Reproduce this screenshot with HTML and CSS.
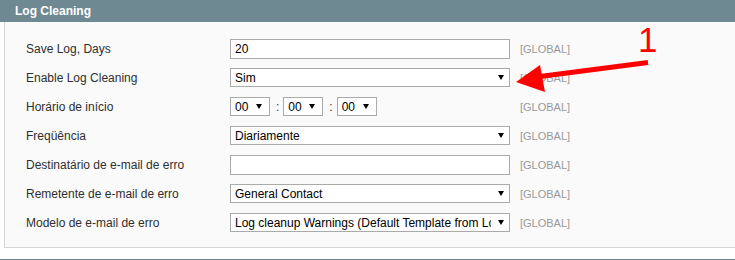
FILE: index.html
```html
<!DOCTYPE html>
<html lang="pt">

<head>
    <meta charset="UTF-8">
    <meta name="viewport" content="width=device-width, initial-scale=1.0">
    <title>Log Cleaning</title>
    <link rel="stylesheet" href="styles.css">
</head>

<body>
    <div class="section">
        <div class="section-head">
            <h4>Log Cleaning</h4>
        </div>
        <div class="section-body">
            <div class="form-row">
                <label>Save Log, Days</label>
                <div class="value"><input class="input-text" type="text" value="20"></div>
                <span class="scope">[GLOBAL]</span>
            </div>
            <div class="form-row">
                <label>Enable Log Cleaning</label>
                <div class="value">
                    <div class="select wide"><select><option>Sim</option></select></div>
                </div>
                <span class="scope">[GLOBAL]</span>
            </div>
            <div class="form-row">
                <label>Horário de início</label>
                <div class="value time">
                    <div class="select small"><select><option>00</option></select></div>
                    <span class="colon">:</span>
                    <div class="select small"><select><option>00</option></select></div>
                    <span class="colon">:</span>
                    <div class="select small"><select><option>00</option></select></div>
                </div>
                <span class="scope">[GLOBAL]</span>
            </div>
            <div class="form-row">
                <label>Freqüência</label>
                <div class="value">
                    <div class="select wide"><select><option>Diariamente</option></select></div>
                </div>
                <span class="scope">[GLOBAL]</span>
            </div>
            <div class="form-row">
                <label>Destinatário de e-mail de erro</label>
                <div class="value"><input class="input-text" type="text" value=""></div>
                <span class="scope">[GLOBAL]</span>
            </div>
            <div class="form-row">
                <label>Remetente de e-mail de erro</label>
                <div class="value">
                    <div class="select wide"><select><option>General Contact</option></select></div>
                </div>
                <span class="scope">[GLOBAL]</span>
            </div>
            <div class="form-row">
                <label>Modelo de e-mail de erro</label>
                <div class="value">
                    <div class="select wide"><select><option>Log cleanup Warnings (Default Template from Locale)</option></select></div>
                </div>
                <span class="scope">[GLOBAL]</span>
            </div>
        </div>
    </div>
    <div class="section-head next"></div>

    <!-- annotation drawn over the screenshot -->
    <svg class="annotation" width="735" height="260" viewBox="0 0 735 260">
        <text x="638" y="52" class="mark">1</text>
        <line x1="648" y1="62.5" x2="536" y2="77" stroke="#f00" stroke-width="5" />
        <polygon points="516,82 540,65 545,92" fill="#f00" />
    </svg>
</body>

</html>
```

FILE: styles.css
```css
* {
    padding: 0;
    margin: 0;
    box-sizing: border-box;
}

body {
    position: relative;
    overflow: hidden;
    background: #fff;
    font-family: "Liberation Sans", Arial, sans-serif;
    font-size: 12px;
    color: #2f2f2f;
}

.section-head {
    height: 22px;
    background-color: #6f8992;
    padding: 0 15px;
}

.section-head h4 {
    font-size: 12px;
    font-weight: bold;
    line-height: 22px;
    color: #fff;
}

.section-head.next {
    margin-top: 11px;
}

.section-body {
    width: 740px;
    margin-left: 4px;
    padding: 12px 0 10px 21px;
    background-color: #fafafa;
    border: 1px solid #d6d6d6;
    border-top: 0;
}

.form-row {
    display: grid;
    grid-template-columns: 204px 280px auto;
    align-items: center;
    height: 29px;
}

.form-row label {
    color: #2f2f2f;
}

.value {
    display: flex;
    align-items: center;
}

.input-text {
    width: 280px;
    height: 20px;
    padding: 0 4px;
    border: 1px solid #aaa;
    background: #fff;
    font-family: "Liberation Sans", Arial, sans-serif;
    font-size: 12px;
    color: #000;
    outline: none;
}

.select {
    position: relative;
    height: 19px;
}

.select select {
    appearance: none;
    -webkit-appearance: none;
    width: 100%;
    height: 19px;
    padding: 0 18px 0 4px;
    border: 1px solid #aaa;
    border-radius: 0;
    background: #fff;
    font-family: "Liberation Sans", Arial, sans-serif;
    font-size: 12px;
    color: #000;
    outline: none;
}

.select::after {
    content: "";
    position: absolute;
    right: 6px;
    top: 7px;
    border-left: 3px solid transparent;
    border-right: 3px solid transparent;
    border-top: 5px solid #000;
}

.select.wide {
    width: 280px;
}

.select.small {
    width: 40px;
}

.select.small::after {
    right: 8px;
}

.colon {
    margin: 0 4px 0 6px;
    color: #2f2f2f;
}

.scope {
    margin-left: 10px;
    font-size: 11px;
    color: #999;
}

.annotation {
    position: absolute;
    left: 0;
    top: 0;
    pointer-events: none;
}

.annotation .mark {
    font-family: "Liberation Sans", Arial, sans-serif;
    font-size: 35px;
    fill: #f00;
}
```
